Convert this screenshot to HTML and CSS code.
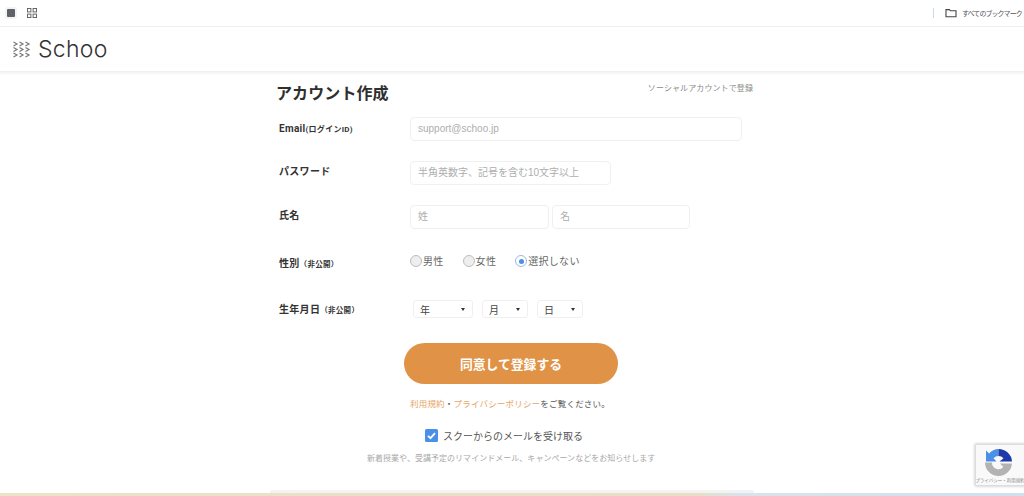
FILE: index.html
```html
<!DOCTYPE html>
<html lang="ja">
<head>
<meta charset="utf-8">
<title>Schoo</title>
<link rel="stylesheet" href="styles.css">
</head>
<body>
<div class="browserbar">
  <div class="bar-left">
    <span class="tab-btn"><span class="tab-square"></span></span>
    <svg class="grid-ico" width="10" height="10" viewBox="0 0 10 10"><g fill="none" stroke="#666" stroke-width="1"><rect x=".5" y=".5" width="3.4" height="3.4"/><rect x="6.100" y=".5" width="3.4" height="3.4"/><rect x=".5" y="6.100" width="3.4" height="3.4"/><rect x="6.100" y="6.100" width="3.4" height="3.4"/></g></svg>
  </div>
  <div class="bar-right">
    <span class="bar-sep"></span>
    <svg width="12" height="10" viewBox="0 0 12 10"><path d="M1 1.6h3.4l1 1.2H11v6H1z" fill="none" stroke="#444" stroke-width="1.1"/></svg>
    <span class="bookmarks">すべてのブックマーク</span>
  </div>
</div>
<header class="site-header">
  <svg class="logo-mark" width="18" height="17" viewBox="0 0 18 17"><g fill="none" stroke="#777" stroke-width="1.2"><path d="M.5 1l3.500 2-3.500 2M.5 6.500l3.500 2-3.500 2M.5 12l3.500 2-3.500 2"/><path d="M6.500 1l3.500 2-3.500 2M6.500 6.500l3.500 2-3.500 2M6.500 12l3.500 2-3.500 2"/><path d="M12.500 1l3.500 2-3.500 2M12.500 6.500l3.500 2-3.500 2M12.500 12l3.500 2-3.500 2"/></g></svg>
  <span class="logo-text">Schoo</span>
</header>
<main class="page">
  <div class="title-row">
    <h1 class="title">アカウント作成</h1>
    <span class="social">ソーシャルアカウントで登録</span>
  </div>
  <div class="row row-email">
    <label class="label">Email<small class="tiny-id">(ログインID)</small></label>
    <input class="field field-full" placeholder="support@schoo.jp">
  </div>
  <div class="row row-pass">
    <label class="label label-up">パスワード</label>
    <input class="field field-pass" placeholder="半角英数字、記号を含む10文字以上">
  </div>
  <div class="row row-name">
    <label class="label label-up">氏名</label>
    <div class="name-pair">
      <input class="field field-last" placeholder="姓">
      <input class="field field-first" placeholder="名">
    </div>
  </div>
  <div class="row row-gender">
    <label class="label label-down">性別<small class="tiny">（非公開）</small></label>
    <div class="radios">
      <span class="radio-item radio-a"><span class="radio"></span>男性</span>
      <span class="radio-item radio-b"><span class="radio"></span>女性</span>
      <span class="radio-item"><span class="radio radio-on"></span>選択しない</span>
    </div>
  </div>
  <div class="row row-birth">
    <label class="label label-birth">生年月日<small class="tiny">（非公開）</small></label>
    <div class="selects">
      <span class="select select-y">年<i class="caret"></i></span>
      <span class="select select-m">月<i class="caret"></i></span>
      <span class="select select-d">日<i class="caret"></i></span>
    </div>
  </div>
  <div class="submit-wrap"><button class="submit" type="button">同意して登録する</button></div>
  <p class="terms"><a class="link">利用規約</a>・<a class="link">プライバシーポリシー</a>をご覧ください。</p>
  <div class="mail-opt">
    <svg width="13" height="13" viewBox="0 0 13 13"><rect width="13" height="13" rx="1.500" fill="#4a90e8"/><path d="M3 6.800l2.500 2.400L10 4.200" fill="none" stroke="#fff" stroke-width="1.800"/></svg>
    <span>スクーからのメールを受け取る</span>
  </div>
  <p class="note">新着授業や、受講予定のリマインドメール、キャンペーンなどをお知らせします</p>
  <div class="strip"></div>
</main>
<div class="page-end"></div>
<aside class="recaptcha">
  <svg class="rc-logo" width="27" height="27" viewBox="0 0 27 27">
    <path d="M13.500 0v7A6.500 6.500 0 0 0 8.500 9.300L11.500 12.500H1V1.500L4.200 4.400A13 13 0 0 1 13.500 0z" fill="#4a90e8"/>
    <path d="M13.500 0A13.500 13.500 0 0 1 27 12.500H14.500L18.500 9.300A6.500 6.500 0 0 0 13.500 7z" fill="#1c3aa9"/>
    <path d="M0 13.500H7A6.500 6.500 0 0 0 18.300 18L15 14.500H27V13.500A13.500 13.500 0 0 1 0 13.500z" fill="#b3b3b3"/>
  </svg>
  <span class="rc-text">プライバシー・利用規約</span>
</aside>
</body>
</html>
```

FILE: styles.css
```css
* { box-sizing: border-box; }
html, body { margin: 0; padding: 0; height: 496px; overflow: hidden; }
body {
  background: #fff;
  font-family: "Roboto", "Liberation Sans", "Noto Sans CJK JP", sans-serif;
  color: #333;
  position: relative;
}
.browserbar {
  height: 27px;
  display: flex;
  align-items: center;
  justify-content: space-between;
  border-bottom: 1px solid #f0f0f0;
  padding: 0 0 0 5px;
}
.bar-left { display: flex; align-items: center; gap: 10px; }
.tab-btn {
  width: 12px; height: 12px; display: flex; align-items: center; justify-content: center;
  background: #f1f3f4; border-radius: 3px;
}
.tab-square { width: 8px; height: 8px; background: #5f6368; border-radius: 1px; }
.bar-right { display: flex; align-items: center; }
.bar-sep { width: 1px; height: 10px; background: #c9dcee; margin-right: 11px; }
.bookmarks { font-size: 7px; color: #555; margin-left: 5px; width: 62px; white-space: nowrap; letter-spacing: -.95px; font-family: "Noto Sans CJK JP", sans-serif; }
.site-header {
  height: 45px;
  display: flex;
  align-items: center;
  padding-left: 13px;
  border-bottom: 1px solid #f0f0f0;
  box-shadow: 0 2px 2px #f5f5f5;
}
.logo-text { font-family: "Inter", "Lato", sans-serif; font-weight: 300; font-size: 23px; color: #333; margin-left: 7px; line-height: 1; letter-spacing: .3px; }
.page { width: 484px; margin-left: 270px; height: 421px; position: relative; }
.title-row { display: flex; justify-content: space-between; height: 45px; padding-left: 6px; }
.title { margin: 8px 0 0; font-size: 16px; line-height: 24px; font-weight: 700; color: #2f2f2f; letter-spacing: 0.1px; font-family: "Noto Sans CJK JP", sans-serif; }
.social { margin: 10px 1px 0 0; font-size: 8px; line-height: 12px; color: #8a8a8a; letter-spacing: 0.1px; font-family: "Noto Sans CJK JP", sans-serif; }
.row { display: flex; align-items: center; }
.label { width: 131px; margin-left: 9px; flex: none; font-size: 10px; font-weight: 700; color: #333; white-space: nowrap; letter-spacing: 0.3px; font-family: "Roboto", "Noto Sans CJK JP", sans-serif; }
.tiny { font-size: 7.500px; font-weight: 700; }
.tiny-id { font-size: 8px; font-weight: 700; }
.row-email, .row-pass, .row-name { height: 24px; margin-bottom: 20px; }
.row-email .label { position: relative; top: -1px; }
.label-up { position: relative; top: -3px; }
.label-down { position: relative; top: 1px; }
.label-birth { position: relative; top: -1px; }
.field {
  height: 24px;
  border: 1px solid #f0f0f3;
  border-radius: 4px;
  background: #fff;
  padding: 0 7px 2px;
  font-size: 10px;
  font-family: "Liberation Sans", "Noto Sans CJK JP", sans-serif;
  outline: none;
}
.field::placeholder { color: #aeaeae; opacity: 1; }
.field-full { width: 332px; }
.field-pass { width: 201px; }
.name-pair { display: flex; gap: 3px; }
.field-last { width: 139px; }
.field-first { width: 138px; }
.row-gender { margin-top: 20px; height: 24px; }
.radios { display: flex; align-items: center; font-size: 10px; color: #666; font-family: "Noto Sans CJK JP", sans-serif; margin-top: -2px; letter-spacing: 0.3px; }
.radio-item { display: flex; align-items: center; white-space: nowrap; }
.radio-a { margin-right: 19px; }
.radio-b { margin-right: 19px; }
.radio { width: 12px; height: 12px; border: 1px solid #bdbdbd; border-radius: 50%; background: #eee; margin-right: 1px; display: block; margin-top: 2px; }
.radio-on { background: #fff; border-color: #9bb9e6; position: relative; }
.radio-on::after { content: ""; position: absolute; left: 2.500px; top: 2.500px; width: 5px; height: 5px; background: #4a90e8; border-radius: 50%; }
.row-birth { margin-top: 27px; height: 18px; }
.selects { display: flex; gap: 9px; margin-left: 3px; font-size: 10px; color: #444; font-family: "Noto Sans CJK JP", sans-serif; }
.select { height: 18px; border: 1px solid #f0f0f3; border-radius: 3px; display: flex; align-items: center; justify-content: space-between; padding: 0 7px 0 6px; }
.select-y { width: 60px; }
.select-m { width: 46px; }
.select-d { width: 46px; }
.caret { width: 0; height: 0; border-left: 2.500px solid transparent; border-right: 2.500px solid transparent; border-top: 3px solid #333; }
.submit-wrap { margin-top: 25px; margin-left: 134px; }
.submit {
  display: block; width: 214px; height: 41px; border: 0; border-radius: 21px; padding: 0 0 1px;
  background: #e09346; color: #fff; font-size: 12.800px; font-weight: 700;
  font-family: "Noto Sans CJK JP", sans-serif; letter-spacing: 0;
}
.terms { margin: 13px 0 0; padding-left: 140px; font-size: 8.500px; line-height: 13px; color: #555; letter-spacing: 0.2px; font-family: "Noto Sans CJK JP", sans-serif; white-space: nowrap; }
.link { color: #e6a566; }
.mail-opt { margin: 18px 0 0 155px; display: flex; align-items: center; gap: 5px; height: 14px; font-size: 10px; color: #555; font-family: "Noto Sans CJK JP", sans-serif; letter-spacing: 0; }
.note { margin: 10px 0 0; padding-left: 97px; font-size: 8px; line-height: 12px; color: #a8a8a8; letter-spacing: 0.03px; font-family: "Noto Sans CJK JP", sans-serif; white-space: nowrap; }
.strip { position: absolute; left: 0; bottom: 0; width: 100%; height: 3px; background: #f3f3f4; border-radius: 2px 2px 0 0; }
.page-end { height: 3px; background: linear-gradient(90deg, #ece2c8 0%, #e6dfc6 68%, #d8e4ea 72%, #cfe0ee 100%); }
.recaptcha {
  position: absolute; right: -1px; top: 444px; width: 50px; height: 42px;
  background: #f9f9f9; border: 1px solid #ddd; box-shadow: 0 0 3px #bbb;
  display: flex; flex-direction: column; align-items: center; padding-top: 4px;
}
.rc-logo { margin-right: 3px; flex: none; }
.rc-text { font-size: 4.500px; color: #888; white-space: nowrap; margin-top: 1px; font-family: "Noto Sans CJK JP", sans-serif; }
```
